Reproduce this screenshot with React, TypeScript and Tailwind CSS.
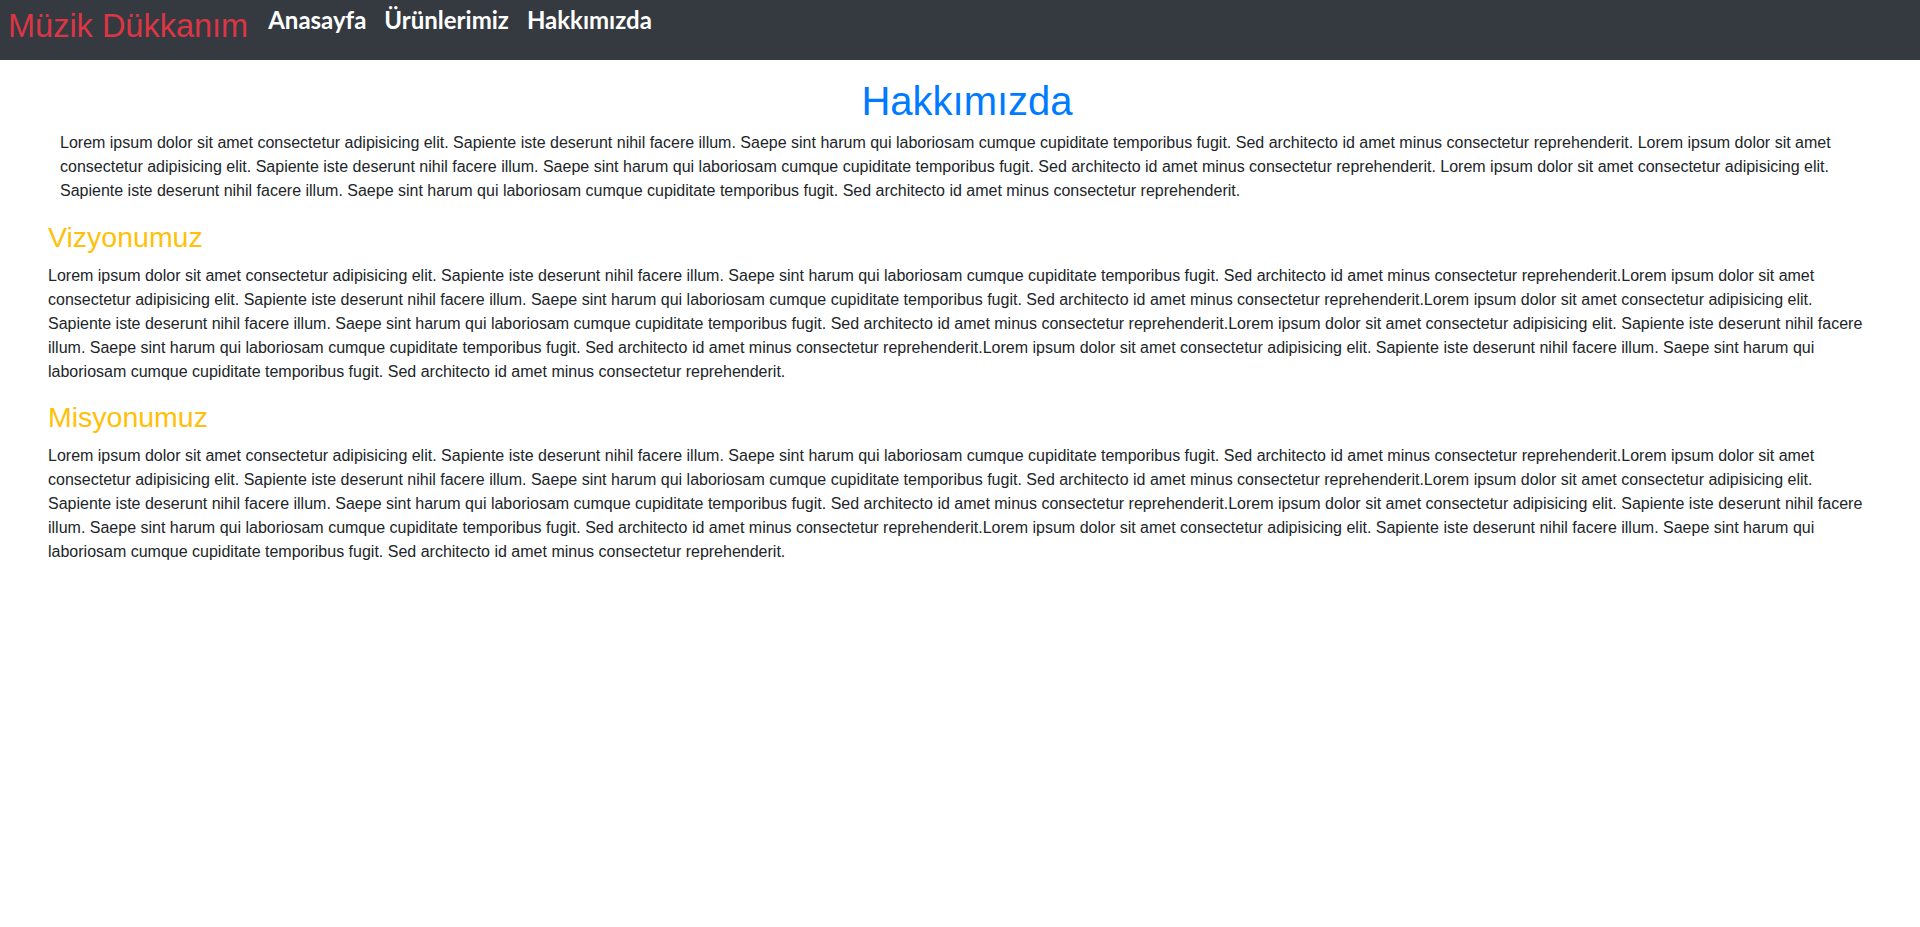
const lorem =
  'Lorem ipsum dolor sit amet consectetur adipisicing elit. Sapiente iste deserunt nihil facere illum. Saepe sint harum qui laboriosam cumque cupiditate temporibus fugit. Sed architecto id amet minus consectetur reprehenderit.'

// the intro joins the sentences with a space, the other two sections don't
const intro = [lorem, lorem, lorem].join(' ')
const section = [lorem, lorem, lorem, lorem, lorem].join('')

const links = ['Anasayfa', 'Ürünlerimiz', 'Hakkımızda']

const sections = [
  { title: 'Vizyonumuz', text: section },
  { title: 'Misyonumuz', text: section },
]

export default function App() {
  return (
    <div className="min-h-screen bg-white font-['Liberation_Sans',Arial,sans-serif] text-[#212529]">
      <nav className="h-[60px] bg-[#343a40] flex items-start px-2">
        <a href="#" className="mt-[7px] text-[32.5px] leading-[39px] text-[#dc3545]">
          Müzik Dükkanım
        </a>
        <ul className="ml-5 flex gap-[18px]">
          {links.map((label) => (
            <li key={label}>
              <a
                href="#"
                className="block mt-2 font-['Lato',sans-serif] text-2xl leading-6 font-bold text-white"
              >
                {label}
              </a>
            </li>
          ))}
        </ul>
      </nav>
      <main className="px-12">
        <h1 className="mt-[17px] mb-[6px] pl-[14px] text-center text-[40px] leading-[48px] font-medium text-[#007bff]">
          Hakkımızda
        </h1>
        <p className="px-3 mb-[17px] text-base leading-6">{intro}</p>
        {sections.map(({ title, text }) => (
          <section key={title}>
            <h3 className="mb-[10px] text-[28.5px] leading-[34px] font-medium text-[#ffc107]">{title}</h3>
            <p className="mb-4 text-base leading-6">{text}</p>
          </section>
        ))}
      </main>
    </div>
  )
}
